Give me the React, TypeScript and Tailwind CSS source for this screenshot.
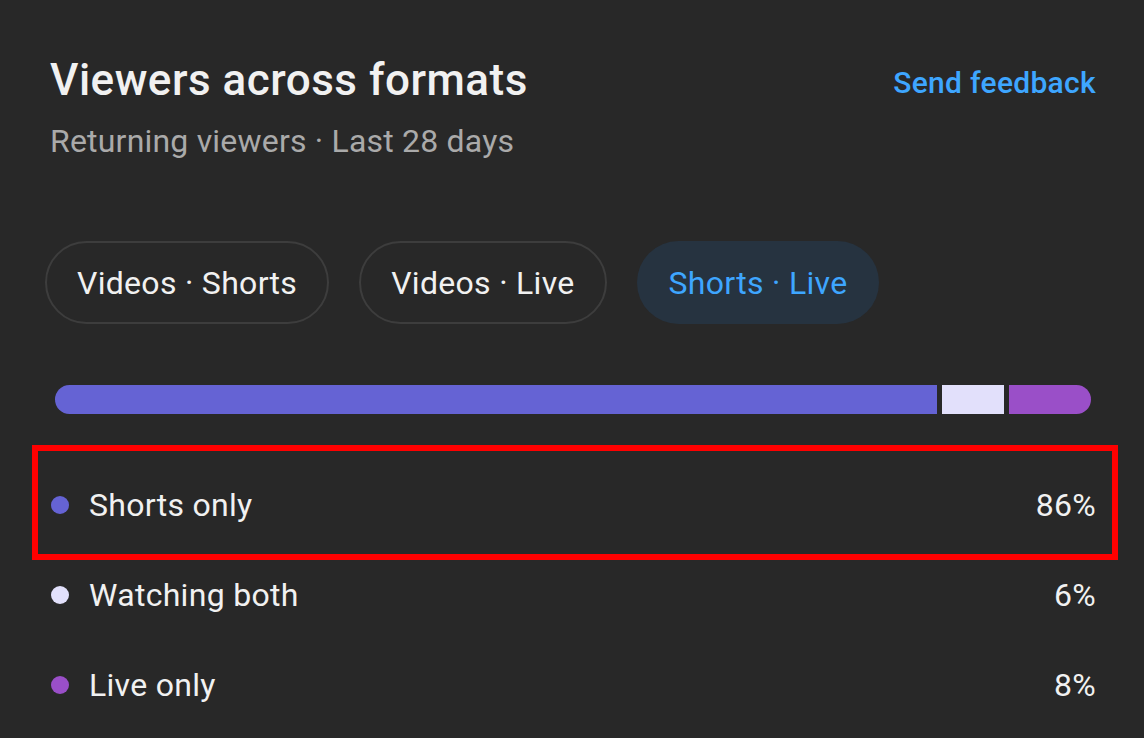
import React from 'react';

const segments = [
  { label: 'Shorts only', value: 86, color: '#6563d4' },
  { label: 'Watching both', value: 6, color: '#e2e0fb' },
  { label: 'Live only', value: 8, color: '#9a4fc8' },
];

const chips = [
  { label: 'Videos · Shorts', active: false },
  { label: 'Videos · Live', active: false },
  { label: 'Shorts · Live', active: true },
];

export default function App() {
  return (
    <div
      className="w-[1144px] h-[738px] overflow-hidden bg-[#282828] text-[#f1f1f1] pl-[50px] pr-[48px] pt-[55px]"
      style={{ fontFamily: 'Roboto, "Noto Sans", sans-serif' }}
    >
      {/* Header */}
      <div className="flex items-start justify-between">
        <div className="flex flex-col">
          <h1 className="text-[44px] leading-[50px] font-medium tracking-[0.5px]">Viewers across formats</h1>
          <p className="mt-[16px] text-[32px] leading-[40px] tracking-[0.2px] text-[#aaaaaa]">Returning viewers · Last 28 days</p>
        </div>
        <button className="mt-[8px] text-[30px] leading-[40px] font-medium tracking-[0.3px] text-[#3ea6ff]">Send feedback</button>
      </div>

      {/* Chips */}
      <div className="mt-[80px] -ml-[5px] flex gap-[30px]">
        {chips.map((c) => (
          <button
            key={c.label}
            className={`h-[83px] px-[30px] rounded-full text-[32px] tracking-[0.3px] ${
              c.active
                ? 'bg-[#263340] text-[#3ea6ff] border-2 border-transparent'
                : 'border-2 border-[#3d3d3d] text-[#f1f1f1]'
            }`}
          >
            {c.label}
          </button>
        ))}
      </div>

      {/* Stacked bar */}
      <div className="mt-[61px] ml-[5px] mr-[5px] flex h-[29px] gap-[5px] rounded-full overflow-hidden">
        {segments.map((s) => (
          <div key={s.label} className="h-full" style={{ width: `${s.value}%`, backgroundColor: s.color }} />
        ))}
      </div>

      {/* Legend */}
      <div className="mt-[46px] flex flex-col">
        {segments.map((s, i) => (
          <div key={s.label} className="relative flex h-[90px] items-center">
            {i === 0 && (
              <div className="absolute left-[-18px] right-[-22px] top-[-15px] bottom-[-10px] border-[6px] border-[#ff0000] pointer-events-none" />
            )}
            <span className="ml-px h-[18px] w-[18px] rounded-full" style={{ backgroundColor: s.color }} />
            <span className="ml-[20px] text-[32px] leading-[40px] tracking-[0.3px]">{s.label}</span>
            <span className="ml-auto text-[32px] leading-[40px] tracking-[0.3px]">{s.value}%</span>
          </div>
        ))}
      </div>
    </div>
  );
}
